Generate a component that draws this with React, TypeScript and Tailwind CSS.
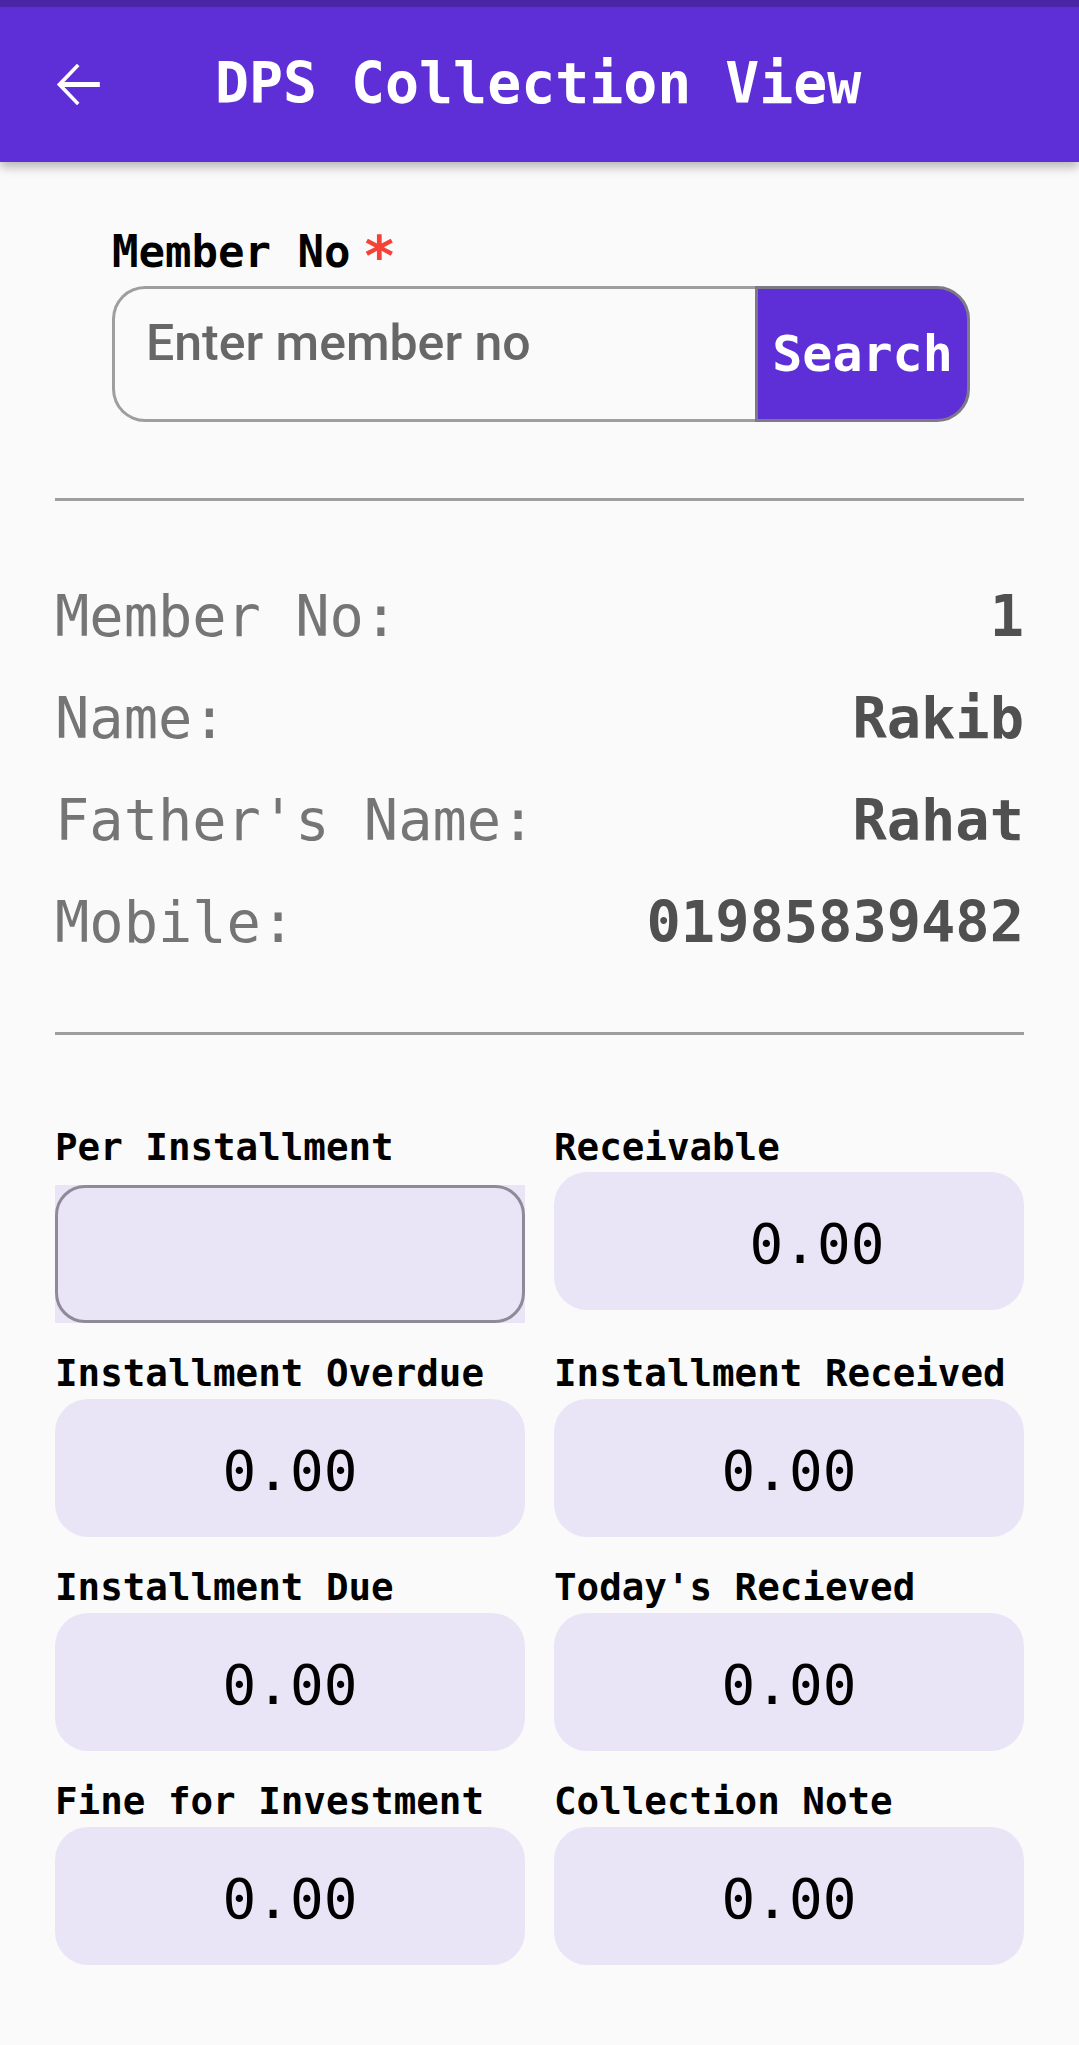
import React from 'react';

const mono = { fontFamily: '"DejaVu Sans Mono", "Liberation Mono", monospace' };

const BackArrow = () => (
  <svg width="67" height="67" viewBox="0 0 24 24" fill="white">
    <path d="M20 11.1H7.3l5.4-5.6-0.9-0.9L4.6 12l7.2 7.4 0.9-0.9-5.4-5.6H20z" />
  </svg>
);

const InfoRow = ({ label, value }: { label: string; value: string }) => (
  <div className="flex h-[102px] items-center justify-between text-[57px] leading-[102px]">
    <span className="text-[#757575]">{label}</span>
    <span className="font-bold text-[#505050]">{value}</span>
  </div>
);

const AmountField = ({ label, value, first }: { label: string; value: string; first?: boolean }) => (
  <div className="flex flex-col">
    <div className="h-[44px] text-[37.5px] font-bold leading-[44px] text-black whitespace-nowrap">{label}</div>
    <div
      className={
        first
          ? 'mt-[3px] flex h-[138px] items-center justify-center rounded-[33px] bg-[#e9e5f6] pl-[56px] pt-[6px] text-[56px] text-black'
          : 'mt-[4px] flex h-[138px] items-center justify-center rounded-[33px] bg-[#e9e5f6] pt-[6px] text-[56px] text-black'
      }
    >
      {value}
    </div>
  </div>
);

export default function App() {
  return (
    <div className="min-h-screen bg-[#fafafa]" style={mono}>
      {/* Top bar */}
      <div className="relative z-10 shadow-[0_5px_10px_rgba(0,0,0,0.28)]">
        <div className="h-[7px] bg-[#4a25a6]" />
        <div className="flex h-[155px] items-center bg-[#5e2fd7] pl-[44px]">
          <BackArrow />
          <h1 className="ml-[104px] text-[56.5px] font-bold text-white">DPS Collection View</h1>
        </div>
      </div>

      <div className="px-[55px]">
        {/* Member search */}
        <div className="ml-[57px] mr-[54px] pt-[64px]">
          <div className="flex h-[52px] items-start text-[44px] font-bold leading-[52px] text-black">
            Member No
            <span className="ml-[12px] text-[56px] leading-[60px] text-[#f44336]">*</span>
          </div>
          <div className="mt-[8px] flex h-[136px]">
            <input
              type="text"
              placeholder="Enter member no"
              className="h-full min-w-0 flex-1 rounded-l-[33px] border-[3px] border-r-0 border-[#9e9e9e] bg-[#fafafa] px-[31px] pb-[22px] text-[50px] font-medium text-[#444] outline-none placeholder:text-[#676767]"
              style={{ fontFamily: 'Roboto, "Noto Sans", sans-serif' }}
            />
            <button className="h-full w-[215px] rounded-r-[33px] border-[3px] border-[#7d7a86] bg-[#5e2fd7] text-[50px] font-bold text-white">
              Search
            </button>
          </div>
        </div>

        <div className="mt-[76px] h-[3px] bg-[#9e9e9e]" />

        {/* Member info */}
        <div className="mt-[64px]">
          <InfoRow label="Member No:" value="1" />
          <InfoRow label="Name:" value="Rakib" />
          <InfoRow label="Father's Name:" value="Rahat" />
          <InfoRow label="Mobile:" value="01985839482" />
        </div>

        <div className="mt-[59px] h-[3px] bg-[#9e9e9e]" />

        {/* Amounts */}
        <div className="mt-[90px] grid grid-cols-2 gap-x-[29px] gap-y-[28px]">
          <div className="flex flex-col">
            <div className="h-[44px] text-[37.5px] font-bold leading-[44px] text-black whitespace-nowrap">Per Installment</div>
            <div className="mt-[16px] h-[138px] bg-[#e9e5f6]">
              <input
                type="text"
                className="h-full w-full rounded-[30px] border-[3px] border-[#8f8a98] bg-transparent px-[30px] text-[56px] outline-none"
              />
            </div>
          </div>
          <AmountField label="Receivable" value="0.00" first />
          <AmountField label="Installment Overdue" value="0.00" />
          <AmountField label="Installment Received" value="0.00" />
          <AmountField label="Installment Due" value="0.00" />
          <AmountField label="Today's Recieved" value="0.00" />
          <AmountField label="Fine for Investment" value="0.00" />
          <AmountField label="Collection Note" value="0.00" />
        </div>
      </div>
    </div>
  );
}
